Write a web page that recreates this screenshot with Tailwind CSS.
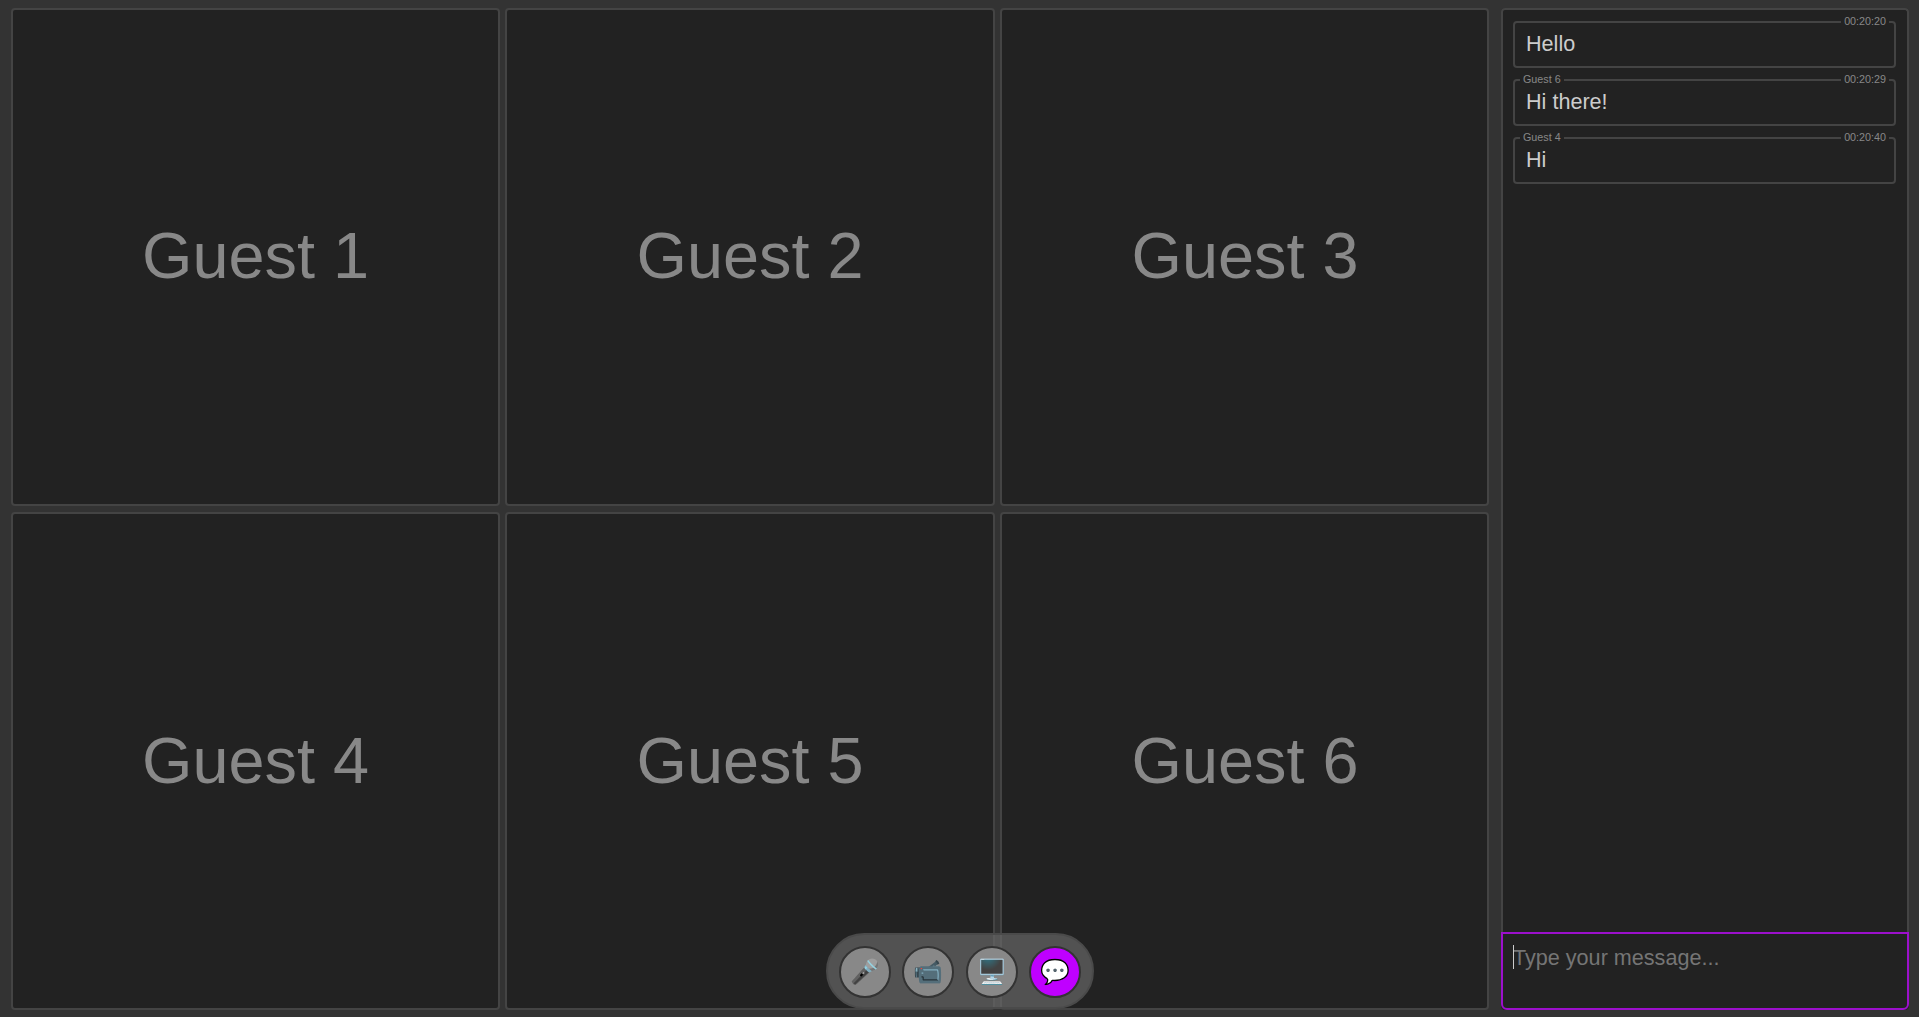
<!DOCTYPE html>
<html lang="en"><head><meta charset="utf-8"><title>Call</title>
<script src="https://cdn.jsdelivr.net/npm/@tailwindcss/browser@4"></script></head>
<body class="m-0 h-[1017px] w-[1919px] overflow-hidden bg-[#333333] font-['Liberation_Sans',Arial,sans-serif]">
<div class="flex h-full gap-[12px] pt-[8px] pb-[7px] pl-[11px] pr-[10px]">
  <main class="relative h-full w-[1478px]">
    <div class="grid h-full grid-cols-[489px_490px_489px] grid-rows-2 gap-x-[5px] gap-y-[6px]">
      <div class="flex items-center justify-center rounded-[4px] border-2 border-[#444444] bg-[#222222] pb-[2px] text-[64.8px] text-[#888888]">Guest 1</div>
      <div class="flex items-center justify-center rounded-[4px] border-2 border-[#444444] bg-[#222222] pb-[2px] text-[64.8px] text-[#888888]">Guest 2</div>
      <div class="flex items-center justify-center rounded-[4px] border-2 border-[#444444] bg-[#222222] pb-[2px] pl-[1px] text-[64.8px] text-[#888888]">Guest 3</div>
      <div class="flex items-center justify-center rounded-[4px] border-2 border-[#444444] bg-[#222222] text-[64.8px] text-[#888888]">Guest 4</div>
      <div class="flex items-center justify-center rounded-[4px] border-2 border-[#444444] bg-[#222222] text-[64.8px] text-[#888888]">Guest 5</div>
      <div class="flex items-center justify-center rounded-[4px] border-2 border-[#444444] bg-[#222222] pl-[1px] text-[64.8px] text-[#888888]">Guest 6</div>
    </div>
    <div class="absolute bottom-[1px] left-[815px] flex h-[76px] w-[268px] items-center justify-center gap-[11.33px] rounded-[38px] border-2 border-[#4a4a4a] bg-[#666666]/70 pt-[1px]">
      <button class="flex h-[52px] w-[52px] items-center justify-center rounded-full border-2 border-[#333333] bg-[#888888] text-[24px]">🎤</button>
      <button class="flex h-[52px] w-[52px] items-center justify-center rounded-full border-2 border-[#333333] bg-[#888888] text-[24px]">📹</button>
      <button class="flex h-[52px] w-[52px] items-center justify-center rounded-full border-2 border-[#333333] bg-[#888888] text-[24px]">🖥️</button>
      <button class="flex h-[52px] w-[52px] items-center justify-center rounded-full border-2 border-[#333333] bg-[#bf00ff] text-[24px]">💬</button>
    </div>
  </main>
  <aside class="flex h-full w-[408px] flex-col rounded-[4px] bg-[#222222]">
    <div class="flex min-h-0 flex-1 flex-col gap-[11.5px] overflow-y-auto rounded-t-[4px] border-2 border-b-0 border-[#444444] bg-[#222222] pl-[10px] pr-[11px] pt-[11px]">
      <div class="relative flex h-[46.5px] shrink-0 items-center rounded-[4px] border-2 border-[#444444] pb-[2px] pl-[11px] pr-[10px] text-[21.6px] leading-[25px] text-[#cccccc]">Hello
        <span class="absolute -top-[8px] right-[5px] bg-[#222222] px-[3px] text-[10.75px] leading-[12px] text-[#888888]">00:20:20</span></div>
      <div class="relative flex h-[46.5px] shrink-0 items-center rounded-[4px] border-2 border-[#444444] pb-[2px] pl-[11px] pr-[10px] text-[21.6px] leading-[25px] text-[#cccccc]">Hi there!
        <span class="absolute -top-[8px] left-[5px] bg-[#222222] px-[3px] text-[10.75px] leading-[12px] text-[#888888]">Guest 6</span>
        <span class="absolute -top-[8px] right-[5px] bg-[#222222] px-[3px] text-[10.75px] leading-[12px] text-[#888888]">00:20:29</span></div>
      <div class="relative flex h-[46.5px] shrink-0 items-center rounded-[4px] border-2 border-[#444444] pb-[2px] pl-[11px] pr-[10px] text-[21.6px] leading-[25px] text-[#cccccc]">Hi
        <span class="absolute -top-[8px] left-[5px] bg-[#222222] px-[3px] text-[10.75px] leading-[12px] text-[#888888]">Guest 4</span>
        <span class="absolute -top-[8px] right-[5px] bg-[#222222] px-[3px] text-[10.75px] leading-[12px] text-[#888888]">00:20:40</span></div>
    </div>
    <div class="h-[78px] shrink-0 rounded-b-[6px] border-2 border-[#9c10cc] px-[10px] pt-[12px] text-[21.6px] leading-[24px] text-[#757575]"><span class="relative"><span class="absolute left-0 top-0 h-[24px] w-px bg-[#cccccc]"></span>Type your message...</span></div>
  </aside>
</div>
</body></html>
